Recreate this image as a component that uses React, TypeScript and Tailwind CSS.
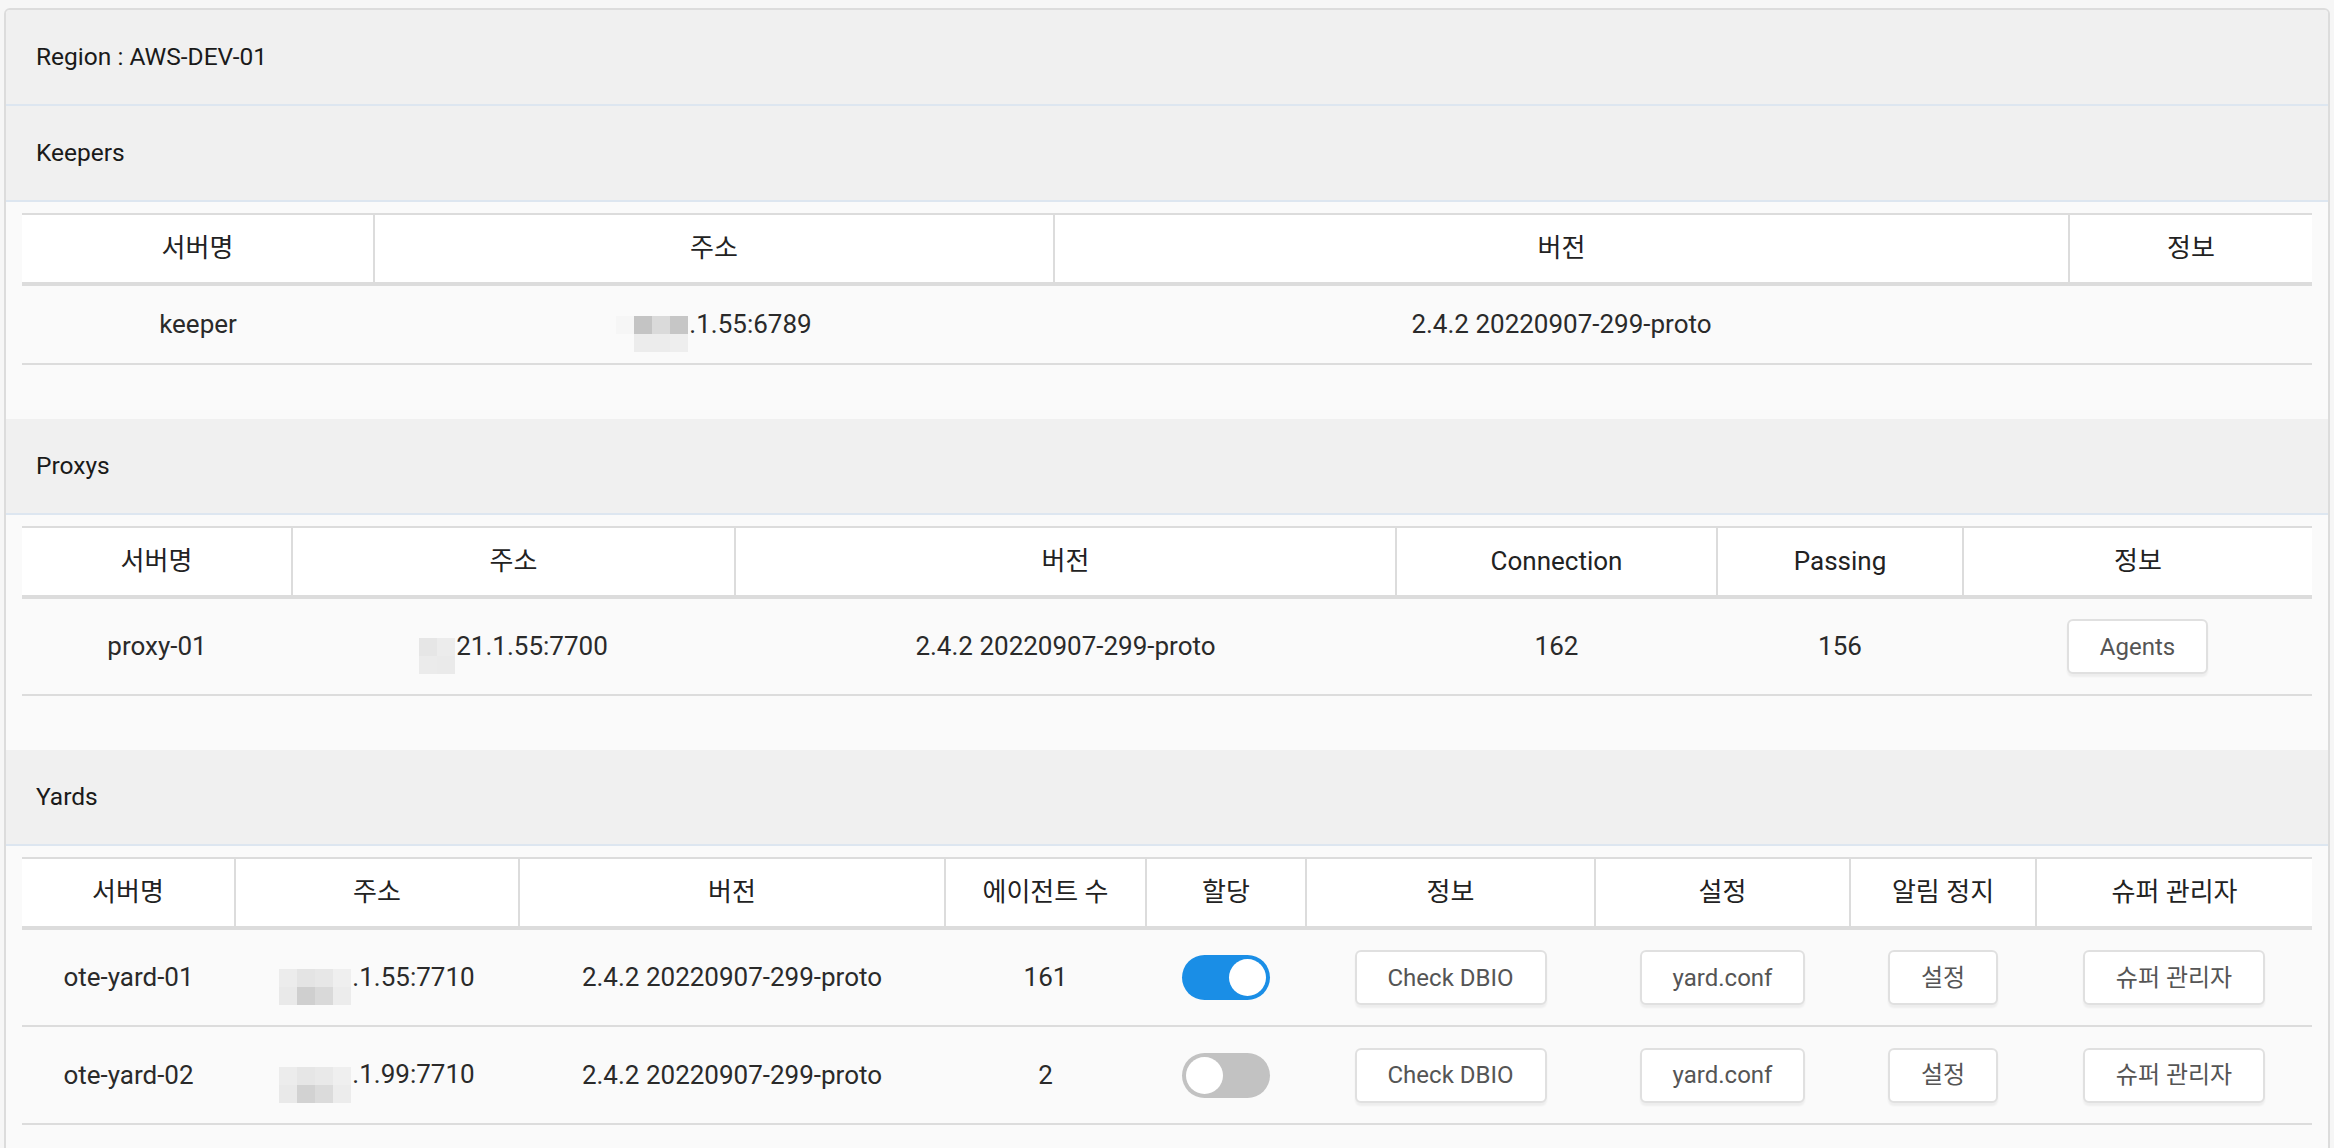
import React from "react";

const FONT = "font-['Roboto','Noto_Sans_CJK_KR',sans-serif]";

function Header({ children }: { children: React.ReactNode }) {
  return (
    <div className="h-[96px] flex items-center pl-[30px] bg-[#f0f0f0] border-b-2 border-[#dde6f0] text-[24.5px] text-[#1a1a1a]">
      {children}
    </div>
  );
}

function Mosaic({ wide, cells }: { wide: boolean; cells: string[] }) {
  return (
    <span
      className={
        wide
          ? "inline-grid grid-cols-[repeat(4,18px)] auto-rows-[18px] align-middle mr-[1px] translate-y-[8px]"
          : "inline-grid grid-cols-[repeat(2,18px)] auto-rows-[18px] align-middle mr-[1px] translate-y-[8px]"
      }
    >
      {cells.map((c, i) => (
        <span key={i} className={c} />
      ))}
    </span>
  );
}

function Btn({ children }: { children: React.ReactNode }) {
  return (
    <button className="h-[55px] px-[31px] bg-white border-2 border-[#e0e0e0] rounded-[6px] text-[24px] text-[#555] shadow-[0_3px_2px_rgba(0,0,0,0.05)]">
      {children}
    </button>
  );
}

function Toggle({ on }: { on: boolean }) {
  return (
    <div
      className={
        on
          ? "inline-flex w-[88px] h-[45px] rounded-full bg-[#1a8ee6] p-[4px] justify-end items-center align-middle"
          : "inline-flex w-[88px] h-[45px] rounded-full bg-[#c2c2c2] p-[4px] justify-start items-center align-middle"
      }
    >
      <div className="w-[37px] h-[37px] rounded-full bg-white" />
    </div>
  );
}

function Th({ children, first, w }: { children: React.ReactNode; first?: boolean; w: string }) {
  return (
    <th
      className={
        (first
          ? "h-[70px] font-normal text-[26px] text-[#222] bg-white border-t-2 border-b-[4px] border-[#dcdcdc] "
          : "h-[70px] font-normal text-[26px] text-[#222] bg-white border-t-2 border-b-[4px] border-l-2 border-[#dcdcdc] ") + w
      }
    >
      {children}
    </th>
  );
}

function Td({ children, tall }: { children?: React.ReactNode; tall?: boolean }) {
  return (
    <td
      className={
        tall
          ? "h-[98px] text-center text-[26px] text-[#2a2a2a] border-b-2 border-[#dcdcdc] bg-[#fafafa]"
          : "h-[80px] text-center text-[26px] text-[#2a2a2a] border-b-2 border-[#dcdcdc] bg-[#fafafa]"
      }
    >
      {children}
    </td>
  );
}

function Body({ children }: { children: React.ReactNode }) {
  return <div className="px-4 pt-[11px] pb-[54px] bg-[#fafafa]">{children}</div>;
}

const keeperMask = [
  "bg-[#f6f6f6]", "bg-[#c4c4c4]", "bg-[#dadada]", "bg-[#c6c6c6]",
  "bg-transparent", "bg-[#ececec]", "bg-[#ececec]", "bg-[#eeeeee]",
];
const proxyMask = ["bg-[#e6e6e6]", "bg-[#ececec]", "bg-[#ebebeb]", "bg-[#eaeaea]"];
const yardMask1 = [
  "bg-[#ececec]", "bg-[#e4e4e4]", "bg-[#e7e7e7]", "bg-[#efefef]",
  "bg-[#e9e9e9]", "bg-[#cfcfcf]", "bg-[#d9d9d9]", "bg-[#ececec]",
];
const yardMask2 = [
  "bg-[#ececec]", "bg-[#e6e6e6]", "bg-[#e9e9e9]", "bg-[#efefef]",
  "bg-[#e9e9e9]", "bg-[#d2d2d2]", "bg-[#dbdbdb]", "bg-[#ececec]",
];

export default function App() {
  const yards = [
    { name: "ote-yard-01", addr: ".1.55:7710", agents: "161", on: true, mask: yardMask1 },
    { name: "ote-yard-02", addr: ".1.99:7710", agents: "2", on: false, mask: yardMask2 },
  ];

  return (
    <div className={`min-h-screen bg-[#f6f6f6] pt-2 px-1 ${FONT}`}>
      <div className="border-2 border-[#dcdcdc] rounded-t-[6px] bg-[#fafafa] overflow-hidden">
        <Header>Region : AWS-DEV-01</Header>
        <Header>Keepers</Header>
        <Body>
          <table className="w-full table-fixed border-collapse">
            <thead>
              <tr>
                <Th first w="w-[352px]">서버명</Th>
                <Th w="w-[680px]">주소</Th>
                <Th w="w-[1015px]">버전</Th>
                <Th w="w-[243px]">정보</Th>
              </tr>
            </thead>
            <tbody>
              <tr>
                <Td>keeper</Td>
                <Td>
                  <Mosaic wide cells={keeperMask} />
                  .1.55:6789
                </Td>
                <Td>2.4.2 20220907-299-proto</Td>
                <Td />
              </tr>
            </tbody>
          </table>
        </Body>

        <Header>Proxys</Header>
        <Body>
          <table className="w-full table-fixed border-collapse">
            <thead>
              <tr>
                <Th first w="w-[270px]">서버명</Th>
                <Th w="w-[443px]">주소</Th>
                <Th w="w-[661px]">버전</Th>
                <Th w="w-[321px]">Connection</Th>
                <Th w="w-[246px]">Passing</Th>
                <Th w="w-[349px]">정보</Th>
              </tr>
            </thead>
            <tbody>
              <tr>
                <Td tall>proxy-01</Td>
                <Td tall>
                  <Mosaic wide={false} cells={proxyMask} />
                  21.1.55:7700
                </Td>
                <Td tall>2.4.2 20220907-299-proto</Td>
                <Td tall>162</Td>
                <Td tall>156</Td>
                <Td tall>
                  <Btn>Agents</Btn>
                </Td>
              </tr>
            </tbody>
          </table>
        </Body>

        <Header>Yards</Header>
        <Body>
          <table className="w-full table-fixed border-collapse">
            <thead>
              <tr>
                <Th first w="w-[213px]">서버명</Th>
                <Th w="w-[284px]">주소</Th>
                <Th w="w-[426px]">버전</Th>
                <Th w="w-[201px]">에이전트 수</Th>
                <Th w="w-[160px]">할당</Th>
                <Th w="w-[289px]">정보</Th>
                <Th w="w-[255px]">설정</Th>
                <Th w="w-[186px]">알림 정지</Th>
                <Th w="w-[276px]">슈퍼 관리자</Th>
              </tr>
            </thead>
            <tbody>
              {yards.map((r) => (
                <tr key={r.name}>
                  <Td tall>{r.name}</Td>
                  <Td tall>
                    <Mosaic wide cells={r.mask} />
                    {r.addr}
                  </Td>
                  <Td tall>2.4.2 20220907-299-proto</Td>
                  <Td tall>{r.agents}</Td>
                  <Td tall>
                    <Toggle on={r.on} />
                  </Td>
                  <Td tall>
                    <Btn>Check DBIO</Btn>
                  </Td>
                  <Td tall>
                    <Btn>yard.conf</Btn>
                  </Td>
                  <Td tall>
                    <Btn>설정</Btn>
                  </Td>
                  <Td tall>
                    <Btn>슈퍼 관리자</Btn>
                  </Td>
                </tr>
              ))}
            </tbody>
          </table>
        </Body>
      </div>
    </div>
  );
}
